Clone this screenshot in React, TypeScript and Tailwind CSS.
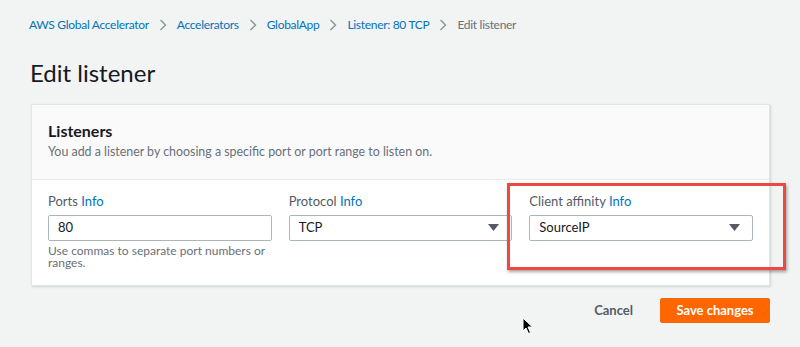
import React from 'react';

const font = { fontFamily: 'Lato, "Open Sans", "Liberation Sans", sans-serif' };

function Chevron() {
    return (
        <svg width="8" height="12" viewBox="0 0 8 12" className="mx-[10px]">
            <path d="M1.5 1 L6.5 6 L1.5 11" fill="none" stroke="#879596" strokeWidth="1.4" />
        </svg>
    );
}

function Caret() {
    return (
        <svg width="11" height="8" viewBox="0 0 11 8">
            <path d="M0 0 H11 L5.5 7 Z" fill="#545b64" />
        </svg>
    );
}

function Label({ text }: { text: string }) {
    return (
        <div className="text-[13px] leading-[16px] text-[#545b64] mb-[6px]">
            {text} <span className="text-[#0073bb]">Info</span>
        </div>
    );
}

export default function App() {
    const crumbs = ['AWS Global Accelerator', 'Accelerators', 'GlobalApp', 'Listener: 80 TCP'];

    return (
        <div className="w-[800px] h-[347px] bg-[#f2f3f3] relative overflow-hidden" style={font}>
            <nav className="flex items-center pl-[29px] pt-[16px] h-[34px] text-[12px] tracking-[-0.3px]">
                {crumbs.map((c) => (
                    <React.Fragment key={c}>
                        <span className="text-[#0073bb]">{c}</span>
                        <Chevron />
                    </React.Fragment>
                ))}
                <span className="text-[#687078]">Edit listener</span>
            </nav>

            <h1 className="pl-[30px] mt-[24px] text-[24px] leading-[30px] text-[#16191f]">
                Edit listener
            </h1>

            <div className="ml-[31px] mt-[16px] w-[739px] bg-white border border-[#e2e5e5] shadow-[1px_1px_2px_#cfd5d5]">
                <div className="bg-[#fafafa] border-b border-[#eaeded] px-[16px] pt-[16px] pb-[16px] h-[75px]">
                    <div className="text-[16px] font-bold leading-[20px] text-[#16191f]">Listeners</div>
                    <div className="text-[12.4px] leading-[18px] mt-[2px] text-[#687078]">
                        You add a listener by choosing a specific port or port range to listen on.
                    </div>
                </div>

                <div className="grid grid-cols-3 gap-[17px] px-[16px] pt-[13px] pb-[16px]">
                    <div>
                        <Label text="Ports" />
                        <div className="h-[26px] border border-[#aab7b8] rounded-[2px] flex items-center px-[9px] text-[13px] text-[#16191f]">
                            80
                        </div>
                        <div className="text-[12px] leading-[12px] mt-[4px] text-[#687078]">
                            Use commas to separate port numbers or ranges.
                        </div>
                    </div>
                    <div>
                        <Label text="Protocol" />
                        <div className="h-[26px] border border-[#aab7b8] rounded-[2px] flex items-center justify-between pl-[9px] pr-[12px] text-[13px] text-[#16191f]">
                            <span>TCP</span>
                            <Caret />
                        </div>
                    </div>
                    <div className="relative">
                        <Label text="Client affinity" />
                        <div className="h-[26px] border border-[#aab7b8] rounded-[2px] flex items-center justify-between pl-[9px] pr-[12px] text-[13px] text-[#16191f]">
                            <span>SourceIP</span>
                            <Caret />
                        </div>
                        <div className="absolute left-[-22px] top-[-10px] w-[279px] h-[87px] border-[3px] border-[#f0483e] shadow-[1px_2px_3px_rgba(0,0,0,0.35)]" />
                    </div>
                </div>
            </div>

            <div className="flex items-center justify-end pr-[30px] mt-[12px]">
                <span className="text-[13px] font-bold text-[#545b64] mr-[27px]">Cancel</span>
                <div className="w-[110px] h-[25px] bg-[#ff6600] rounded-[2px] border border-[#f26a10] flex items-center justify-center text-[13px] font-bold text-white">
                    Save changes
                </div>
            </div>

            <svg className="absolute left-[522px] top-[317px]" width="12" height="18" viewBox="0 0 12 18">
                <path d="M1 1 L1 14 L4 11 L6.5 16.5 L8.5 15.5 L6 10 L10.5 10 Z" fill="#000" stroke="#fff" strokeWidth="1" />
            </svg>
        </div>
    );
}
